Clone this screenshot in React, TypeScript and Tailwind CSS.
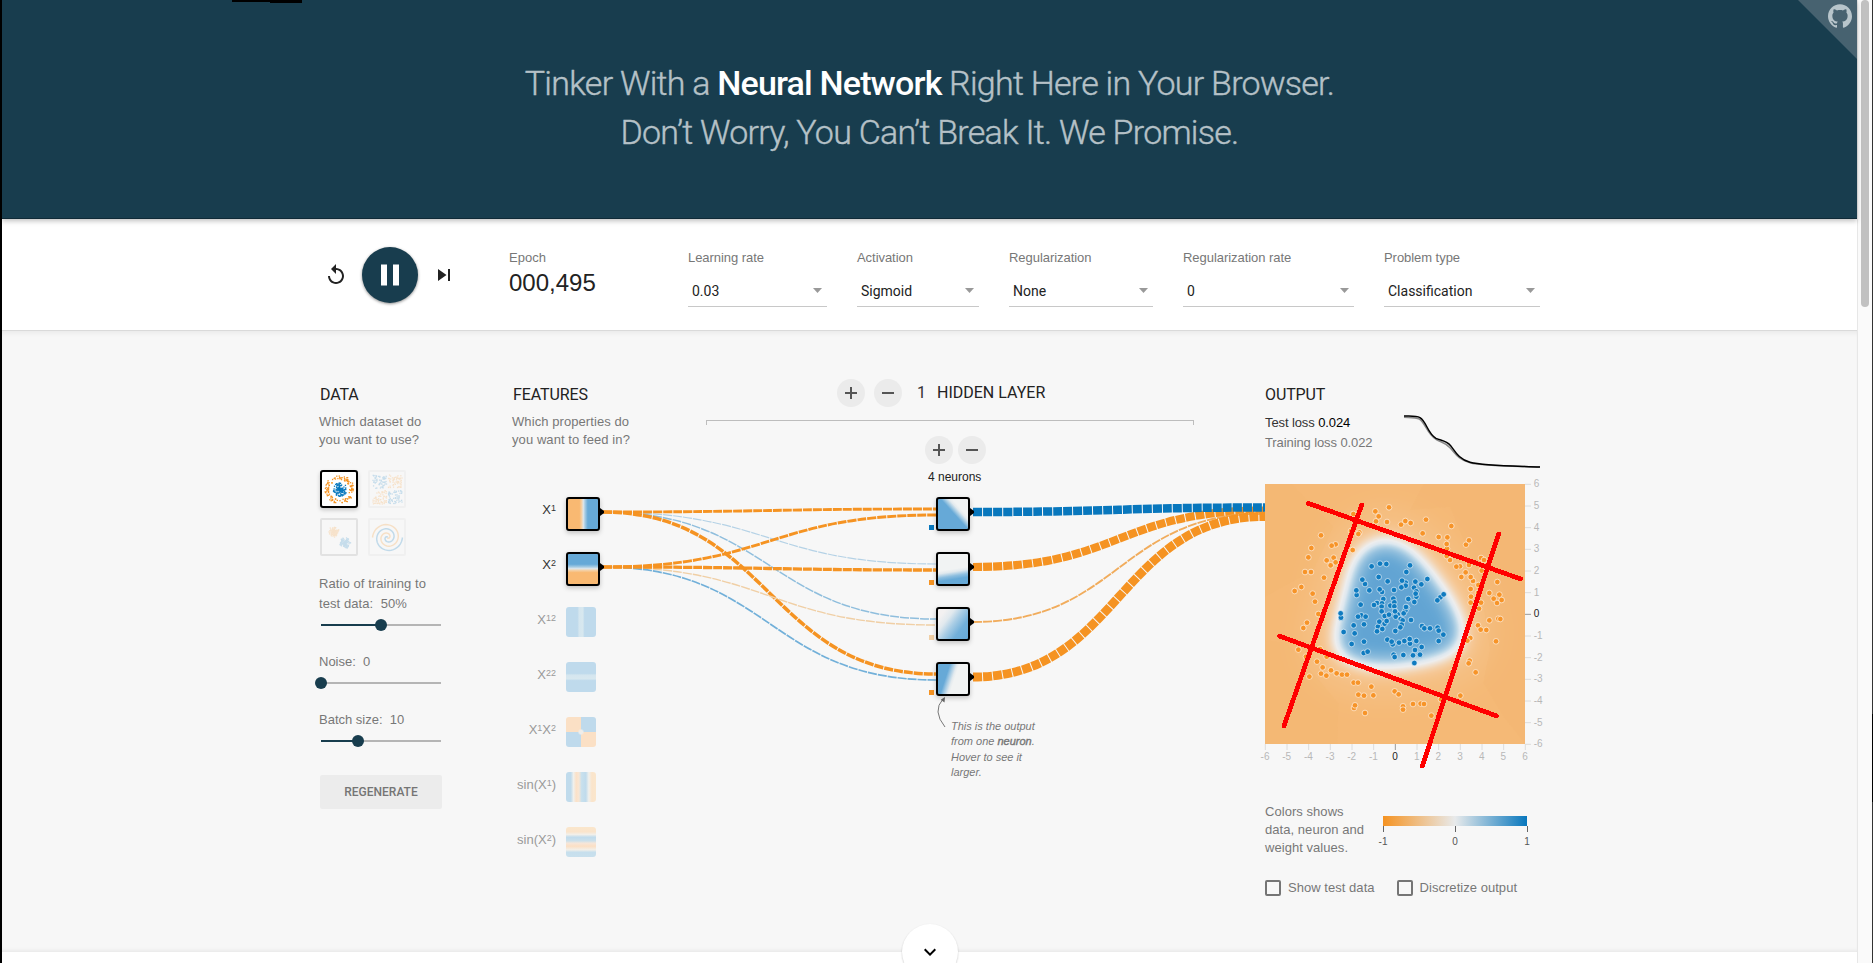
import React from 'react';

type Pt = [number, number];

const ORANGE = '#f59322';
const BLUE = '#0877bd';

function seeded(seed: number) {
  let s = seed;
  return () => {
    s = (s * 16807) % 2147483647;
    return s / 2147483647;
  };
}

/* ---------- header ---------- */

function Header() {
  return (
    <header className="relative z-10 h-[219px] border-b border-[#0f2a37] bg-[#183d4e] pt-[59px] text-center shadow-[0_2px_5px_rgba(0,0,0,0.25)]">
      <div className="absolute left-[230px] top-0 h-[2px] w-[70px] bg-black" />
      <div className="absolute left-[268px] top-0 h-[3px] w-[32px] bg-black" />
      <h1 className="font-['Roboto',sans-serif] text-[34px] font-light leading-[49px] tracking-[-0.74px] text-[#b5c1c7] [-webkit-text-stroke:0.4px_#b5c1c7]">
        Tinker With a{' '}
        <b className="font-medium tracking-[-0.84px] text-white [-webkit-text-stroke:0px]">Neural Network</b> Right Here in Your
        Browser.
        <br />
        Don’t Worry, You Can’t Break It. We Promise.
      </h1>
      <svg className="absolute right-0 top-0" width="59" height="59" viewBox="0 0 59 59">
        <path d="M0 0H59V59z" fill="#476270" />
        <path
          transform="translate(30 4)"
          fill="#b8c5cb"
          d="M12 .297c-6.63 0-12 5.373-12 12 0 5.303 3.438 9.8 8.205 11.385.6.113.82-.258.82-.577 0-.285-.01-1.04-.015-2.04-3.338.724-4.042-1.61-4.042-1.61C4.422 18.07 3.633 17.7 3.633 17.7c-1.087-.744.084-.729.084-.729 1.205.084 1.838 1.236 1.838 1.236 1.07 1.835 2.809 1.305 3.495.998.108-.776.417-1.305.76-1.605-2.665-.3-5.466-1.332-5.466-5.93 0-1.31.465-2.38 1.235-3.22-.135-.303-.54-1.523.105-3.176 0 0 1.005-.322 3.3 1.23.96-.267 1.98-.399 3-.405 1.02.006 2.04.138 3 .405 2.28-1.552 3.285-1.23 3.285-1.23.645 1.653.24 2.873.12 3.176.765.84 1.23 1.91 1.23 3.22 0 4.61-2.805 5.625-5.475 5.92.42.36.81 1.096.81 2.22 0 1.606-.015 2.896-.015 3.286 0 .315.21.69.825.57C20.565 22.092 24 17.592 24 12.297c0-6.627-5.373-12-12-12"
        />
      </svg>
    </header>
  );
}

/* ---------- top controls ---------- */

function Select({ label, value, width }: { label: string; value: string; width: string }) {
  return (
    <div className={width}>
      <div className="text-[13px] leading-4 tracking-[-0.05px] text-[#777]">{label}</div>
      <div className="mt-[17px] flex h-[24px] items-start justify-between border-b border-[#c8c8c8] pl-1 pr-[5px] text-[14px] leading-4 text-[#222]">
        <span className="font-['Roboto',sans-serif]">{value}</span>
        <svg className="mt-[5px]" width="9" height="5" viewBox="0 0 9 5">
          <path d="M0 0H9L4.500 5z" fill="#999" />
        </svg>
      </div>
    </div>
  );
}

function Controls() {
  return (
    <section className="flex h-[112px] items-start border-b border-[#dadada] bg-white pl-[322px]">
      <svg className="mt-[44px]" width="24" height="24" viewBox="0 0 24 24" fill="#222">
        <path d="M12 5V1L7 6l5 5V7c3.310 0 6 2.690 6 6s-2.690 6-6 6-6-2.690-6-6H4c0 4.420 3.580 8 8 8s8-3.580 8-8-3.580-8-8-8z" />
      </svg>
      <button className="ml-[14px] mt-[28px] flex h-14 w-14 items-center justify-center rounded-full bg-[#183d4e] shadow-[0_1px_3px_rgba(0,0,0,0.45)]">
        <svg width="36" height="36" viewBox="0 0 24 24" fill="#fff">
          <path d="M6 19h4V5H6v14zm8-14v14h4V5h-4z" />
        </svg>
      </button>
      <svg className="ml-[14px] mt-[44px]" width="24" height="24" viewBox="0 0 24 24" fill="#222">
        <path d="M6 18l8.500-6L6 6v12zM16 6v12h2V6h-2z" />
      </svg>
      <div className="flex items-start gap-[30px] pl-[54px] pt-[31px]">
        <div className="w-[148px]">
          <div className="-ml-px text-[13px] leading-4 text-[#777]">Epoch</div>
          <div className="-ml-px mt-[3px] text-[24px] leading-7 text-[#222]">000,495</div>
        </div>
        <Select label="Learning rate" value="0.03" width="w-[139px]" />
        <Select label="Activation" value="Sigmoid" width="w-[122px]" />
        <Select label="Regularization" value="None" width="w-[144px]" />
        <Select label="Regularization rate" value="0" width="w-[171px]" />
        <Select label="Problem type" value="Classification" width="w-[156px]" />
      </div>
    </section>
  );
}

/* ---------- data column ---------- */

function Title({ children }: { children: React.ReactNode }) {
  return <h2 className="font-['Roboto',sans-serif] text-[16px] leading-5 tracking-[-0.12px] text-[#222]">{children}</h2>;
}

function Specks({ pts, color }: { pts: Pt[]; color: string }) {
  return (
    <g fill={color}>
      {pts.map(([x, y], i) => (
        <rect key={i} x={x - 0.6} y={y - 0.6} width="1.3" height="1.3" />
      ))}
    </g>
  );
}

function ring(seed: number, n: number, r0: number, r1: number, cx: number, cy: number): Pt[] {
  const rnd = seeded(seed);
  return Array.from({ length: n }, () => {
    const a = rnd() * Math.PI * 2;
    const r = r0 + rnd() * (r1 - r0);
    return [cx + r * Math.cos(a), cy + r * Math.sin(a)] as Pt;
  });
}

function block(seed: number, n: number, x: number, y: number, s: number): Pt[] {
  const rnd = seeded(seed);
  return Array.from({ length: n }, () => [x + rnd() * s, y + rnd() * s] as Pt);
}

function spiral(phase: number): string {
  return Array.from({ length: 70 }, (_, i) => {
    const t = i / 69;
    const a = t * 1.75 * Math.PI * 2 + phase;
    const r = t * 15;
    return `${i ? 'L' : 'M'}${(17.500 + r * Math.sin(a)).toFixed(2)} ${(17.500 + r * Math.cos(a)).toFixed(2)}`;
  }).join('');
}

function Datasets() {
  const faded = 'rounded-[2px] border-2 border-[#f0f0f0]';
  return (
    <div className="mt-[21px] grid w-[86px] grid-cols-2 gap-[10px]">
      <div className="h-[38px] w-[38px] rounded-[3px] border-2 border-black bg-white shadow-[0_2px_4px_rgba(0,0,0,0.2)]">
        <svg width="34" height="34">
          <Specks pts={ring(11, 120, 10, 14.5, 17.5, 17.5)} color={ORANGE} />
          <Specks pts={ring(29, 120, 0, 7, 18, 17.5)} color={BLUE} />
        </svg>
      </div>
      <div className={faded}>
        <svg width="34" height="34" opacity="0.2">
          <Specks pts={block(3, 60, 3, 3, 13.5)} color={BLUE} />
          <Specks pts={block(7, 60, 18.5, 3, 13.5)} color={ORANGE} />
          <Specks pts={block(13, 60, 3, 18.5, 13.5)} color={ORANGE} />
          <Specks pts={block(17, 60, 18.5, 18.5, 13.5)} color={BLUE} />
        </svg>
      </div>
      <div className="rounded-[2px] border-2 border-[#e2e2e2]">
        <svg width="34" height="34" opacity="0.2">
          <Specks pts={ring(5, 110, 0, 5.5, 12, 12)} color={ORANGE} />
          <Specks pts={ring(9, 110, 0, 5.5, 23, 23)} color={BLUE} />
        </svg>
      </div>
      <div className={faded}>
        <svg width="34" height="34" opacity="0.22" fill="none" strokeWidth="1.5">
          <path d={spiral(0)} stroke={ORANGE} transform="rotate(0 17.500 17.500)" />
          <path d={spiral(Math.PI)} stroke={BLUE} transform="rotate(0 17.500 17.500)" />
        </svg>
      </div>
    </div>
  );
}

function Slider({ pos }: { pos: number }) {
  return (
    <svg className="mt-[5px] block overflow-visible" width="122" height="12">
      <rect x="1" y="5" width="120" height="2" fill="#b5b5b5" />
      <rect x="1" y="5" width={pos} height="2" fill="#183d4e" />
      <circle cx={1 + pos} cy="6" r="6" fill="#183d4e" />
    </svg>
  );
}

function DataColumn() {
  return (
    <section className="w-[122px] pt-[54px] text-[13px] text-[#777]">
      <Title>DATA</Title>
      <p className="-ml-px mt-[8px] whitespace-nowrap leading-[18px] tracking-[0.12px]">
        Which dataset do
        <br />
        you want to use?
      </p>
      <Datasets />
      <p className="-ml-px mt-[18px] whitespace-nowrap leading-5 tracking-[0.08px]">
        Ratio of training to
        <br />
        test data:&nbsp; 50%
      </p>
      <Slider pos={60} />
      <p className="-ml-px mt-[21px] leading-5">Noise:&nbsp; 0</p>
      <Slider pos={0} />
      <p className="-ml-px mt-[21px] leading-5">Batch size:&nbsp; 10</p>
      <Slider pos={37} />
      <button className="mt-7 h-[34px] w-[122px] rounded-[2px] bg-[#ececec] font-['Roboto',sans-serif] text-[12px] font-medium text-[#757575]">
        REGENERATE
      </button>
    </section>
  );
}

/* ---------- features ---------- */

function Sup({ children }: { children: React.ReactNode }) {
  return <span className="align-[3px] text-[9px] leading-none">{children}</span>;
}

function Bump() {
  return (
    <svg className="absolute -right-[6px] top-[9px]" width="4" height="8" viewBox="0 0 4 8">
      <path d="M0 0L4 3v2L0 8z" fill="#000" />
    </svg>
  );
}

function Cell({ fill }: { fill: string }) {
  return (
    <div className={`relative h-[34px] w-[34px] shrink-0 rounded-[3px] border-2 border-black shadow-[0_2px_5px_rgba(0,0,0,0.22)] ${fill}`}>
      <Bump />
    </div>
  );
}

function Feature({ label, fill, active }: { label: React.ReactNode; fill: string; active?: boolean }) {
  return (
    <div className={`flex h-[55px] items-start ${active ? 'text-[#333]' : 'text-[#9a9a9a]'}`}>
      <div className="flex w-[43px] justify-end whitespace-nowrap pt-[3px] text-right leading-5">
        <span>{label}</span>
      </div>
      <div className="w-[10px]" />
      {active ? <Cell fill={fill} /> : <div className={`h-[30px] w-[30px] rounded-[3px] ${fill}`} />}
    </div>
  );
}

function FeaturesColumn() {
  return (
    <section className="ml-[71px] w-[122px] pt-[54px] text-[13px]">
      <Title>FEATURES</Title>
      <p className="-ml-px mt-[8px] whitespace-nowrap leading-[18px] tracking-[0.08px] text-[#777]">
        Which properties do
        <br />
        you want to feed in?
      </p>
      <div className="mt-[48px]">
        <Feature active label={<>X<Sup>1</Sup></>} fill="bg-[linear-gradient(90deg,#f9b972_38%,#f3d2aa_46%,#dfe6ea_51%,#a5cbe3_57%,#66a9d7_66%)]" />
        <Feature active label={<>X<Sup>2</Sup></>} fill="bg-[linear-gradient(180deg,#66a9d7_34%,#a5cbe3_43%,#dfe6ea_49%,#f3d2aa_54%,#f9b972_62%)]" />
        <Feature label={<>X<Sup>12</Sup></>} fill="bg-[linear-gradient(90deg,#bfdaec_38%,#d5e6ef_44%,#d8e8ef_56%,#bfdaec_62%)]" />
        <Feature label={<>X<Sup>22</Sup></>} fill="bg-[linear-gradient(180deg,#bfdaec_38%,#d5e6ef_44%,#d8e8ef_56%,#bfdaec_62%)]" />
        <Feature
          label={<>X<Sup>1</Sup>X<Sup>2</Sup></>}
          fill="bg-[radial-gradient(circle,#eeedea_8%,transparent_16%),conic-gradient(#bfdaec_0_88deg,#fbe0c5_92deg_178deg,#bfdaec_182deg_268deg,#fbe0c5_272deg_358deg,#bfdaec)]"
        />
        <Feature
          label={<>sin(X<Sup>1</Sup>)</>}
          fill="bg-[linear-gradient(90deg,#c0dbec_16%,#f0f0ec_25%,#fbe1c8_34%,#f8e6d4_43%,#c8e0ed_52%,#c0dbec_66%,#f0f0ec_76%,#fae4cb_86%,#fae6cc)]"
        />
        <Feature
          label={<>sin(X<Sup>2</Sup>)</>}
          fill="bg-[linear-gradient(180deg,#fae6cc,#fae4cb_16%,#f2efe9_25%,#c0dbec_34%,#cbe0eb_46%,#f6e6d9_54%,#fbdfc4_64%,#f2efe9_76%,#c6dfed_84%,#c9e0ed)]"
        />
      </div>
    </section>
  );
}

/* ---------- hidden layer ---------- */

function RoundButton({ plus }: { plus?: boolean }) {
  return (
    <button className="flex h-7 w-7 items-center justify-center rounded-full bg-[#ebebeb]">
      <svg width="12" height="12" fill="#555">
        <rect x="0" y="5" width="12" height="2" />
        {plus && <rect x="5" y="0" width="2" height="12" />}
      </svg>
    </button>
  );
}

function Neuron({ fill, bias }: { fill: string; bias: string }) {
  return (
    <div className="flex items-end">
      <div className={`mb-[1px] mr-[2px] h-[5px] w-[5px] ${bias}`} />
      <Cell fill={fill} />
    </div>
  );
}

function HiddenColumn() {
  return (
    <section className="relative z-10 ml-[71px] w-[488px] pt-[48px]">
      <div className="flex items-center pl-[131px]">
        <RoundButton plus />
        <div className="w-[9px]" />
        <RoundButton />
        <span className="ml-[15px] w-[20px] font-['Roboto',sans-serif] text-[16px] leading-5 text-[#333]">1</span>
        <h2 className="font-['Roboto',sans-serif] text-[16px] leading-5 text-[#222]">HIDDEN LAYER</h2>
      </div>
      <div className="mt-[13px] h-[5px] border-x border-t border-[#bdbdbd]" />
      <div className="mt-[11px] flex gap-[5px] pl-[219px]">
        <RoundButton plus />
        <RoundButton />
      </div>
      <div className="mt-[6px] pl-[222px] text-[12px] leading-[14px] text-[#222]">4 neurons</div>
      <div className="mt-[13px] flex flex-col gap-[21px] pl-[223px]">
        <Neuron bias="bg-[#0877bd]" fill="bg-[linear-gradient(48deg,#66a9d7_52%,#a5cbe3_59%,#e3eaee_66%,#f1f3f3_72%)]" />
        <Neuron bias="bg-[#f59322]" fill="bg-[linear-gradient(171deg,#f1f3f3_50%,#e1e9ee_58%,#8dbedf_70%,#66a9d7_80%)]" />
        <Neuron bias="bg-[#f0cfa5]" fill="bg-[linear-gradient(127deg,#f3f1f1_15%,#e1e9ee_32%,#a9cde5_50%,#72b0da_72%,#66a9d7)]" />
        <Neuron bias="bg-[#f59322]" fill="bg-[linear-gradient(108deg,#66a9d7_30%,#a0c8e3_38%,#e3eaee_48%,#f1f3f3_54%)]" />
      </div>
      <div className="mt-[23px] pl-[245px] text-[11px] italic leading-[15.4px] text-[#777]">
        This is the output
        <br />
        from one <b className="font-normal [-webkit-text-stroke:0.4px_#777]">neuron</b>.
        <br />
        Hover to see it
        <br />
        larger.
      </div>
    </section>
  );
}

const LINKS: { from: Pt; to: Pt; w: number; c: string }[] = [
  { from: [603, 512], to: [936, 564], w: 1.2, c: '#b5d2e6' },
  { from: [603, 512], to: [936, 619], w: 1.5, c: '#8fbedd' },
  { from: [603, 512], to: [936, 509], w: 2.9, c: ORANGE },
  { from: [603, 512], to: [936, 674], w: 3.5, c: ORANGE },
  { from: [603, 567], to: [936, 625], w: 1.4, c: '#f0cfa5' },
  { from: [603, 567], to: [936, 680], w: 1.7, c: '#72b0d9' },
  { from: [603, 567], to: [936, 515], w: 2.9, c: ORANGE },
  { from: [603, 567], to: [936, 570], w: 3.3, c: ORANGE },
  { from: [973, 567], to: [1265, 510.5], w: 8.2, c: ORANGE },
  { from: [973, 622], to: [1265, 513.5], w: 1.9, c: '#f1ac5c' },
  { from: [973, 677], to: [1265, 516.5], w: 8.8, c: ORANGE },
  { from: [973, 512], to: [1265, 507.5], w: 8.5, c: BLUE },
];

function Links() {
  return (
    <svg className="absolute left-[598px] top-[149px]" width="665" height="260" viewBox="600 480 665 260" fill="none">
      {LINKS.map(({ from, to, w, c }, i) => {
        const m = (from[0] + to[0]) / 2;
        const d = `M${from[0]} ${from[1]}C${m} ${from[1]} ${m} ${to[1]} ${to[0]} ${to[1]}`;
        return <path key={i} d={d} stroke={c} strokeWidth={w} strokeDasharray="9 1" />;
      })}
      <path d="M945 727Q932 711 943 699" stroke="#777" strokeWidth="1" />
      <path d="M945 697l-0.500 5.500-3.800-2.700z" fill="#666" />
    </svg>
  );
}

/* ---------- output ---------- */

const ORANGE_DOTS: Pt[] = [
  [417, 112], [376, 124], [378, 154], [386, 139], [411, 156], [310, 132], [453, 164], [466, 153], [482, 159], [528, 149],
  [604, 168], [213, 196], [257, 223], [245, 227], [308, 240], [184, 234], [175, 262], [230, 271], [251, 263], [257, 277],
  [242, 286], [165, 306], [183, 306], [222, 323], [154, 351], [134, 363], [188, 371], [195, 395], [205, 432], [171, 458],
  [160, 474], [145, 539], [201, 575], [178, 620], [218, 592], [213, 611], [229, 617], [243, 601], [260, 610], [276, 614],
  [291, 614], [311, 638], [324, 638], [364, 650], [325, 674], [342, 677], [370, 676], [312, 714], [315, 706], [345, 729],
  [434, 664], [446, 673], [459, 709], [459, 719], [489, 702], [512, 701], [522, 702], [544, 737], [631, 677], [677, 607],
  [659, 572], [656, 580], [661, 504], [652, 512], [738, 514], [684, 466], [692, 479], [709, 480], [718, 451], [745, 446],
  [751, 447], [741, 399], [755, 390], [748, 374], [731, 386], [718, 369], [742, 336], [687, 416], [693, 398], [662, 398],
  [663, 380], [662, 357], [684, 369], [669, 333], [662, 321], [634, 321], [647, 307], [630, 289], [619, 290], [600, 270],
  [590, 258], [591, 236], [590, 222], [592, 202], [566, 201], [518, 190], [648, 224], [657, 211], [657, 285], [693, 264],
  [702, 270], [695, 302], [328, 187], [325, 192], [230, 560], [168, 560], [573, 688], [605, 608], [210, 537], [303, 183],
  [685, 345],
];

const BLUE_DOTS: Pt[] = [
  [365, 289], [390, 281], [409, 282], [480, 286], [469, 306], [345, 342], [337, 329], [386, 321], [413, 334], [467, 338],
  [456, 332], [467, 347], [454, 352], [496, 335], [492, 353], [514, 343], [532, 327], [320, 375], [319, 361], [358, 361],
  [396, 366], [389, 358], [432, 360], [499, 380], [499, 364], [497, 371], [475, 387], [493, 396], [571, 382], [562, 391],
  [581, 373], [400, 387], [430, 386], [332, 404], [381, 399], [372, 405], [396, 400], [395, 410], [395, 424], [421, 407],
  [433, 397], [433, 409], [471, 413], [466, 422], [461, 430], [436, 424], [443, 433], [404, 438], [417, 434], [273, 443],
  [272, 430], [334, 436], [324, 440], [347, 440], [342, 463], [311, 466], [281, 486], [314, 490], [305, 522], [342, 515],
  [341, 549], [353, 545], [384, 470], [388, 455], [381, 484], [397, 477], [404, 461], [410, 453], [437, 440], [452, 447],
  [458, 451], [483, 450], [455, 464], [451, 472], [436, 483], [412, 509], [428, 523], [425, 515], [447, 518], [463, 513],
  [480, 521], [479, 507], [499, 513], [516, 468], [523, 475], [540, 475], [563, 473], [566, 482], [580, 494], [566, 513],
  [515, 531], [495, 540], [489, 556], [510, 554], [460, 555], [431, 554], [434, 561], [493, 579], [435, 424], [468, 411],
];

const REGION =
  'M400 210C350 214 315 250 300 310C288 360 272 420 262 470C252 515 252 550 290 568C330 588 370 592 420 590C490 586 560 572 605 550C640 530 645 490 632 450C615 400 580 350 540 300C505 255 460 208 400 210Z';

const STROKES = ['M175 100L812 327', 'M335 105L102 768', 'M746 192L517 888', 'M88 498L740 738'];

const TICKS = [-6, -5, -4, -3, -2, -1, 0, 1, 2, 3, 4, 5, 6];

function Heatmap() {
  return (
    <svg className="relative z-20 block overflow-visible" width="290" height="280" viewBox="45 42 870 840">
      <defs>
        <filter id="field" filterUnits="userSpaceOnUse" x="45" y="42" width="780" height="780" colorInterpolationFilters="sRGB">
          <feGaussianBlur stdDeviation="32" />
          <feComponentTransfer>
            <feFuncR type="table" tableValues="0.961 0.963 0.965 0.957 0.945 0.933 0.870 0.720 0.590 0.490 0.385" />
            <feFuncG type="table" tableValues="0.728 0.750 0.780 0.825 0.880 0.933 0.910 0.835 0.760 0.706 0.647" />
            <feFuncB type="table" tableValues="0.465 0.510 0.580 0.680 0.810 0.933 0.940 0.905 0.875 0.850 0.830" />
          </feComponentTransfer>
        </filter>
      </defs>
      <g filter="url(#field)">
        <rect x="-100" y="-100" width="1100" height="1100" fill="#000" />
        <path d={REGION} fill="none" stroke="#1c1c1c" strokeWidth="210" />
        <path d={REGION} fill="#fff" />
      </g>
      <path d="M125 42L250 170L190 300L45 380V510L110 520L215 640L265 700L262 822H45V42z" fill="#f2b36a" opacity="0.15" />
      <path d="M520 42L480 120L600 110L690 330L720 540L700 640L760 740L825 822V42z" fill="#f2b36a" opacity="0.14" />
      <g strokeWidth="3" stroke="#fff" strokeOpacity="0.6">
        {ORANGE_DOTS.map(([x, y], i) => (
          <circle key={i} cx={x} cy={y} r="8.5" fill="#f79428" />
        ))}
        {BLUE_DOTS.map(([x, y], i) => (
          <circle key={i} cx={x} cy={y} r="8.5" fill="#0f7bc0" />
        ))}
      </g>
      <g strokeWidth="3">
        {TICKS.map((t) => (
          <React.Fragment key={t}>
            <path d={`M825 ${433 - t * 65}h18`} stroke={t ? '#dcdcdc' : '#999'} />
            <path d={`M${436 + t * 65} 822v18`} stroke={t ? '#dcdcdc' : '#999'} />
          </React.Fragment>
        ))}
      </g>
      <g fontSize="30" fontFamily="Liberation Sans, sans-serif">
        {TICKS.map((t) => (
          <React.Fragment key={t}>
            <text x="851" y={442 - t * 65} fill={t ? '#b8b8b8' : '#222'}>{t}</text>
            <text x={435 + t * 65} y="869" textAnchor="middle" fill={t ? '#b8b8b8' : '#222'}>{t}</text>
          </React.Fragment>
        ))}
      </g>
      <g stroke="#f00" strokeWidth="14" strokeLinecap="round" shapeRendering="crispEdges">
        {STROKES.map((d) => (
          <path key={d} d={d} />
        ))}
      </g>
    </svg>
  );
}

const TEST_LOSS = 'M492 138C510 139 528 137 540 143C560 155 562 190 588 205C603 212 618 211 632 227C645 243 655 267 690 277C730 288 820 288 900 291';
const TRAIN_LOSS = 'M492 142C510 143 526 142 538 147C556 158 562 194 588 208C602 217 615 217 630 233C645 249 655 269 690 278C730 288 820 288 900 291';

function Check({ label }: { label: string }) {
  return (
    <label className="flex items-center gap-[7px] whitespace-nowrap tracking-[0.04px]">
      <span className="h-4 w-4 rounded-[2px] border-2 border-[#757575]" />
      {label}
    </label>
  );
}

function OutputColumn() {
  return (
    <section className="ml-[71px] w-[290px] pt-[54px] text-[13px] text-[#777]">
      <Title>OUTPUT</Title>
      <div className="mt-[8px] flex h-[71px]">
        <div className="w-[139px] whitespace-nowrap leading-5 tracking-[-0.1px]">
          <p className="text-[#333]">
            Test loss <span className="text-black">0.024</span>
          </p>
          <p>Training loss 0.022</p>
        </div>
        <svg width="136" height="60" viewBox="492 129 408 180" fill="none" className="overflow-visible">
          <path d={TRAIN_LOSS} stroke="#888" strokeWidth="4.500" />
          <path d={TEST_LOSS} stroke="#000" strokeWidth="4.500" />
        </svg>
      </div>
      <Heatmap />
      <div className="mt-[39px] flex">
        <p className="w-[113px] whitespace-nowrap leading-[18px] tracking-[0.05px]">
          Colors shows
          <br />
          data, neuron and
          <br />
          weight values.
        </p>
        <svg className="mt-[13px] overflow-visible" width="154" height="32">
          <defs>
            <linearGradient id="scale">
              <stop offset="0" stopColor={ORANGE} />
              <stop offset="0.5" stopColor="#e8eaeb" />
              <stop offset="1" stopColor={BLUE} />
            </linearGradient>
          </defs>
          <rect x="5" width="144" height="10" fill="url(#scale)" />
          <path d="M5.500 10v6M77.500 10v6M149.500 10v6" stroke="#666" />
          <g fontSize="10" fill="#555" textAnchor="middle">
            <text x="5" y="28.500">-1</text>
            <text x="77" y="28.500">0</text>
            <text x="149" y="28.500">1</text>
          </g>
        </svg>
      </div>
      <div className="mt-[23px] flex h-4 items-center gap-[22px]">
        <Check label="Show test data" />
        <Check label="Discretize output" />
      </div>
    </section>
  );
}

/* ---------- page ---------- */

export default function App() {
  return (
    <div className="flex h-[963px] w-[1873px] overflow-hidden bg-white font-['Liberation_Sans',Arial,sans-serif]">
      <div className="w-[2px] shrink-0 bg-black" />
      <div className="relative w-[1855px] shrink-0">
        <Header />
        <Controls />
        <main className="relative flex h-[621px] items-start bg-[#f7f7f7] pl-[318px] shadow-[inset_0_5px_5px_-3px_rgba(0,0,0,0.06),inset_0_-4px_4px_-3px_rgba(0,0,0,0.08)]">
          <Links />
          <DataColumn />
          <FeaturesColumn />
          <HiddenColumn />
          <OutputColumn />
        </main>
        <button className="absolute left-[900px] top-[924px] z-10 flex h-14 w-14 items-center justify-center rounded-full bg-white shadow-[0_1px_2px_rgba(0,0,0,0.22)]">
          <svg width="24" height="24" viewBox="0 0 24 24">
            <path d="M16.590 8.590L12 13.170 7.410 8.590 6 10l6 6 6-6z" />
          </svg>
        </button>
      </div>
      <div className="flex w-[15px] shrink-0 justify-center border-l border-[#e7e7e7] bg-[#fafafa]">
        <div className="h-[307px] w-2 rounded-full bg-[#c1c1c1]" />
      </div>
      <div className="w-px shrink-0 bg-[#333] pt-[714px]">
        <div className="h-[88px] bg-black" />
      </div>
    </div>
  );
}
